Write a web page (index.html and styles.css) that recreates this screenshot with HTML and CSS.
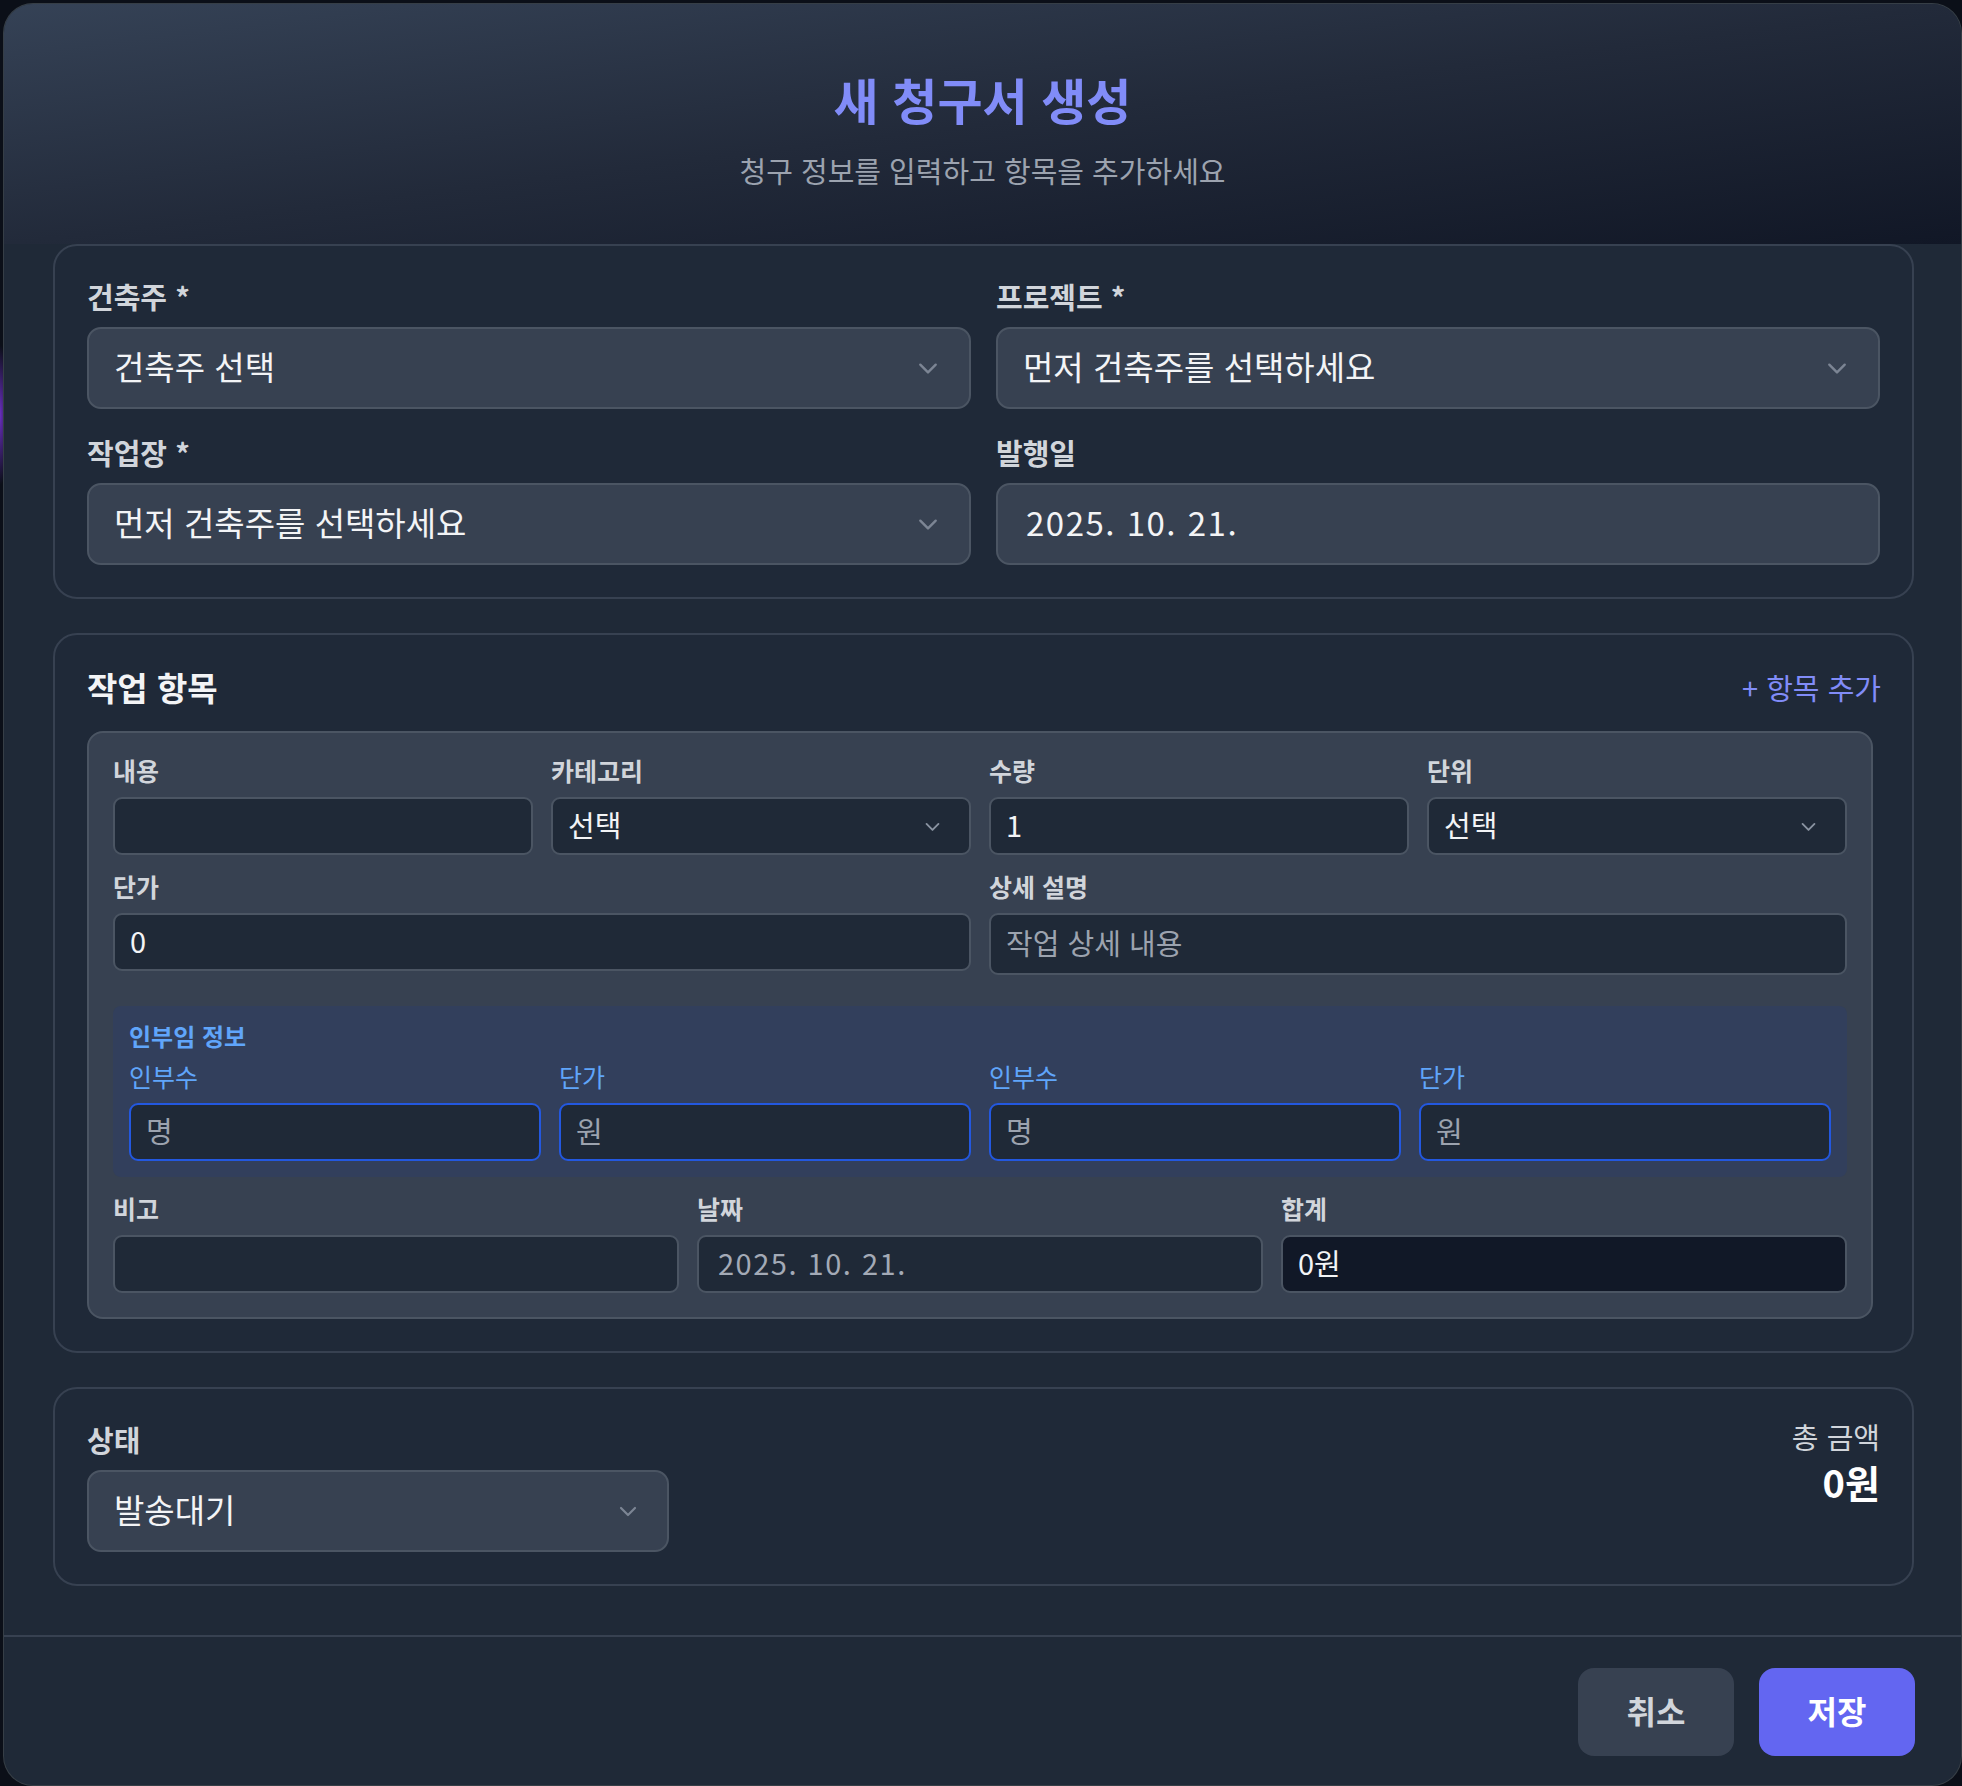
FILE: index.html
```html
<!DOCTYPE html>
<html lang="ko">
<head>
<meta charset="utf-8">
<title>새 청구서 생성</title>
<link rel="stylesheet" href="styles.css">
</head>
<body>
<div class="page">
  <div class="modal">
    <header class="modal-header">
      <h1 class="title">새 청구서 생성</h1>
      <p class="subtitle">청구 정보를 입력하고 항목을 추가하세요</p>
    </header>

    <div class="modal-body">
      <section class="card">
        <div class="grid-2">
          <div class="field">
            <div class="label">건축주 <span class="req">*</span></div>
            <div class="select-lg"><span>건축주 선택</span>
              <svg class="chev" viewBox="0 0 20 20"><polyline points="3,7 10,14 17,7"/></svg>
            </div>
          </div>
          <div class="field">
            <div class="label">프로젝트 <span class="req">*</span></div>
            <div class="select-lg"><span>먼저 건축주를 선택하세요</span>
              <svg class="chev" viewBox="0 0 20 20"><polyline points="3,7 10,14 17,7"/></svg>
            </div>
          </div>
          <div class="field">
            <div class="label">작업장 <span class="req">*</span></div>
            <div class="select-lg"><span>먼저 건축주를 선택하세요</span>
              <svg class="chev" viewBox="0 0 20 20"><polyline points="3,7 10,14 17,7"/></svg>
            </div>
          </div>
          <div class="field">
            <div class="label">발행일</div>
            <div class="select-lg date"><span>2025. 10. 21.</span></div>
          </div>
        </div>
      </section>

      <section class="card">
        <div class="items-head">
          <h2 class="items-title">작업 항목</h2>
          <button class="add-btn">+ 항목 추가</button>
        </div>
        <div class="item-box">
          <div class="grid-4">
            <div class="field">
              <div class="ilabel">내용</div>
              <div class="iinput"></div>
            </div>
            <div class="field">
              <div class="ilabel">카테고리</div>
              <div class="iinput iselect"><span>선택</span>
                <svg class="chev-sm" viewBox="0 0 20 20"><polyline points="3,7 10,14 17,7"/></svg>
              </div>
            </div>
            <div class="field">
              <div class="ilabel">수량</div>
              <div class="iinput"><span>1</span></div>
            </div>
            <div class="field">
              <div class="ilabel">단위</div>
              <div class="iinput iselect"><span>선택</span>
                <svg class="chev-sm" viewBox="0 0 20 20"><polyline points="3,7 10,14 17,7"/></svg>
              </div>
            </div>
            <div class="field span-2">
              <div class="ilabel">단가</div>
              <div class="iinput"><span>0</span></div>
            </div>
            <div class="field span-2">
              <div class="ilabel">상세 설명</div>
              <div class="iinput itextarea"><span class="ph">작업 상세 내용</span></div>
            </div>
          </div>

          <div class="labor">
            <div class="labor-title">인부임 정보</div>
            <div class="labor-grid">
              <div class="field">
                <div class="llabel">인부수</div>
                <div class="linput"><span class="ph">명</span></div>
              </div>
              <div class="field">
                <div class="llabel">단가</div>
                <div class="linput"><span class="ph">원</span></div>
              </div>
              <div class="field">
                <div class="llabel">인부수</div>
                <div class="linput"><span class="ph">명</span></div>
              </div>
              <div class="field">
                <div class="llabel">단가</div>
                <div class="linput"><span class="ph">원</span></div>
              </div>
            </div>
          </div>

          <div class="grid-3">
            <div class="field">
              <div class="ilabel">비고</div>
              <div class="iinput"></div>
            </div>
            <div class="field">
              <div class="ilabel">날짜</div>
              <div class="iinput idate"><span>2025. 10. 21.</span></div>
            </div>
            <div class="field">
              <div class="ilabel">합계</div>
              <div class="iinput itotal"><span>0원</span></div>
            </div>
          </div>
        </div>
      </section>

      <section class="card status-card">
        <div class="field status-field">
          <div class="label">상태</div>
          <div class="select-lg status-select"><span>발송대기</span>
            <svg class="chev-md" viewBox="0 0 20 20"><polyline points="3,7 10,14 17,7"/></svg>
          </div>
        </div>
        <div class="total">
          <div class="total-label">총 금액</div>
          <div class="total-value">0원</div>
        </div>
      </section>
    </div>

    <footer class="modal-footer">
      <button class="btn btn-cancel">취소</button>
      <button class="btn btn-save">저장</button>
    </footer>
  </div>
</div>
</body>
</html>
```

FILE: styles.css
```css
* { box-sizing: border-box; }

html, body {
  margin: 0;
  height: 1786px;
  overflow: hidden;
}

body {
  background:
    radial-gradient(ellipse 10px 70px at 0 415px, #6a2fc0 0%, rgba(106,47,192,0) 100%),
    #0b0f18;
  font-family: "Noto Sans CJK KR", "Noto Sans", sans-serif;
  color: #f3f4f6;
}

.page {
  padding: 3px 0 0 3px;
  height: 1786px;
}

.modal {
  width: 1959px;
  height: 1783px;
  background: #1f2937;
  border: 1px solid rgba(160, 160, 140, 0.18);
  border-radius: 30px;
  overflow: hidden;
  display: flex;
  flex-direction: column;
}

/* Header */
.modal-header {
  flex: none;
  height: 240px;
  padding-top: 65px;
  text-align: center;
  background: linear-gradient(to bottom right, #354256 0%, #222a3a 50%, #111726 100%);
}

.title {
  margin: 0;
  font-size: 49px;
  line-height: 60px;
  font-weight: 700;
  color: #818cf8;
}

.subtitle {
  margin: 23px 0 0;
  font-size: 29px;
  line-height: 36px;
  color: #9ca3af;
}

/* Body */
.modal-body {
  flex: none;
  padding: 0 47px 49px 49px;
  display: flex;
  flex-direction: column;
  gap: 34px;
}

.card {
  border: 2px solid #374151;
  border-radius: 24px;
  padding: 32px;
  background: #1f2938;
}

.field {
  display: flex;
  flex-direction: column;
  min-width: 0;
}

.grid-2 {
  display: grid;
  grid-template-columns: 1fr 1fr;
  gap: 25px;
}

.label {
  font-size: 29px;
  line-height: 36px;
  font-weight: 600;
  color: #d1d5db;
  margin-bottom: 13px;
}

.req {
  color: #d1d5db;
}

.select-lg {
  height: 82px;
  background: #374151;
  border: 2px solid #4b5563;
  border-radius: 14px;
  padding: 0 30px 5px 25px;
  display: flex;
  align-items: center;
  justify-content: space-between;
  font-size: 33px;
  color: #f3f4f6;
}

.select-lg .chev,
.select-lg .chev-md {
  margin-top: 5px;
}

.select-lg.date {
  padding-left: 28px;
  letter-spacing: 1.5px;
}

.chev {
  width: 22px;
  height: 22px;
  fill: none;
  stroke: #7c8594;
  stroke-width: 2.2;
  stroke-linecap: round;
  stroke-linejoin: round;
}

.chev-sm {
  width: 17px;
  height: 17px;
  fill: none;
  stroke: #8a93a1;
  stroke-width: 2.2;
  stroke-linecap: round;
  stroke-linejoin: round;
  margin-right: -1px;
  margin-top: 4px;
}

.chev-md {
  width: 20px;
  height: 20px;
  fill: none;
  stroke: #7c8594;
  stroke-width: 2.2;
  stroke-linecap: round;
  stroke-linejoin: round;
}

/* Items */
.items-head {
  height: 40px;
  margin-bottom: 24px;
  display: flex;
  align-items: center;
  justify-content: space-between;
}

.items-title {
  margin: 0;
  font-size: 33px;
  line-height: 40px;
  font-weight: 700;
  color: #f3f4f6;
}

.add-btn {
  background: none;
  border: none;
  padding: 0;
  font-family: inherit;
  font-size: 29px;
  line-height: 40px;
  color: #818cf8;
  margin-right: -1px;
}

.item-box {
  margin-right: 7px;
  background: #374151;
  border: 2px solid #4b5563;
  border-radius: 16px;
  padding: 24px;
}

.grid-4 {
  display: grid;
  grid-template-columns: repeat(4, 1fr);
  gap: 18px;
}

.span-2 {
  grid-column: span 2;
}

.grid-3 {
  display: grid;
  grid-template-columns: repeat(3, 1fr);
  gap: 18px;
  margin-top: 18px;
}

.ilabel {
  font-size: 25px;
  line-height: 26px;
  font-weight: 600;
  color: #d1d5db;
  margin-bottom: 14px;
}

.iinput {
  height: 58px;
  background: #1f2937;
  border: 2px solid #4b5563;
  border-radius: 9px;
  padding: 0 15px 4px;
  display: flex;
  align-items: center;
  justify-content: space-between;
  font-size: 29px;
  color: #f3f4f6;
}

.iselect {
  padding-right: 29px;
}

.itextarea {
  height: 62px;
  align-items: flex-start;
  padding-top: 6px;
}

.ph {
  color: #9ca3af;
}

.idate {
  color: #a3aab6;
  padding-left: 19px;
  letter-spacing: 1.5px;
}

.itotal {
  background: #111827;
}

/* Labor */
.labor {
  margin-top: 31px;
  background: #323f5c;
  border-radius: 8px;
  padding: 16px;
}

.labor-title {
  font-size: 24px;
  line-height: 28px;
  font-weight: 700;
  color: #60a5fa;
}

.labor-grid {
  margin-top: 13px;
  display: grid;
  grid-template-columns: repeat(4, 1fr);
  gap: 18px;
}

.llabel {
  font-size: 25px;
  line-height: 26px;
  color: #60a5fa;
  margin-bottom: 14px;
}

.linput {
  height: 58px;
  background: #1f2937;
  border: 2px solid #2358e0;
  border-radius: 9px;
  padding: 0 15px 4px;
  display: flex;
  align-items: center;
  font-size: 29px;
}

/* Status */
.status-card {
  display: flex;
  justify-content: space-between;
  align-items: flex-start;
}

.status-field {
  width: 582px;
}

.status-select {
  padding-right: 29px;
}

.total {
  text-align: right;
}

.total-label {
  font-size: 29px;
  line-height: 30px;
  color: #d1d5db;
}

.total-value {
  margin-top: 6px;
  font-size: 38px;
  line-height: 50px;
  font-weight: 700;
  color: #ffffff;
}

/* Footer */
.modal-footer {
  flex: none;
  border-top: 2px solid #374151;
  padding: 31px 46px 30px 0;
  display: flex;
  justify-content: flex-end;
  gap: 25px;
}

.btn {
  height: 88px;
  border: none;
  border-radius: 16px;
  font-family: inherit;
  font-size: 32px;
  font-weight: 700;
  padding-bottom: 5px;
}

.btn-cancel {
  width: 156px;
  background: #374151;
  color: #d1d5db;
}

.btn-save {
  width: 156px;
  background: #6366f1;
  color: #ffffff;
}
```
